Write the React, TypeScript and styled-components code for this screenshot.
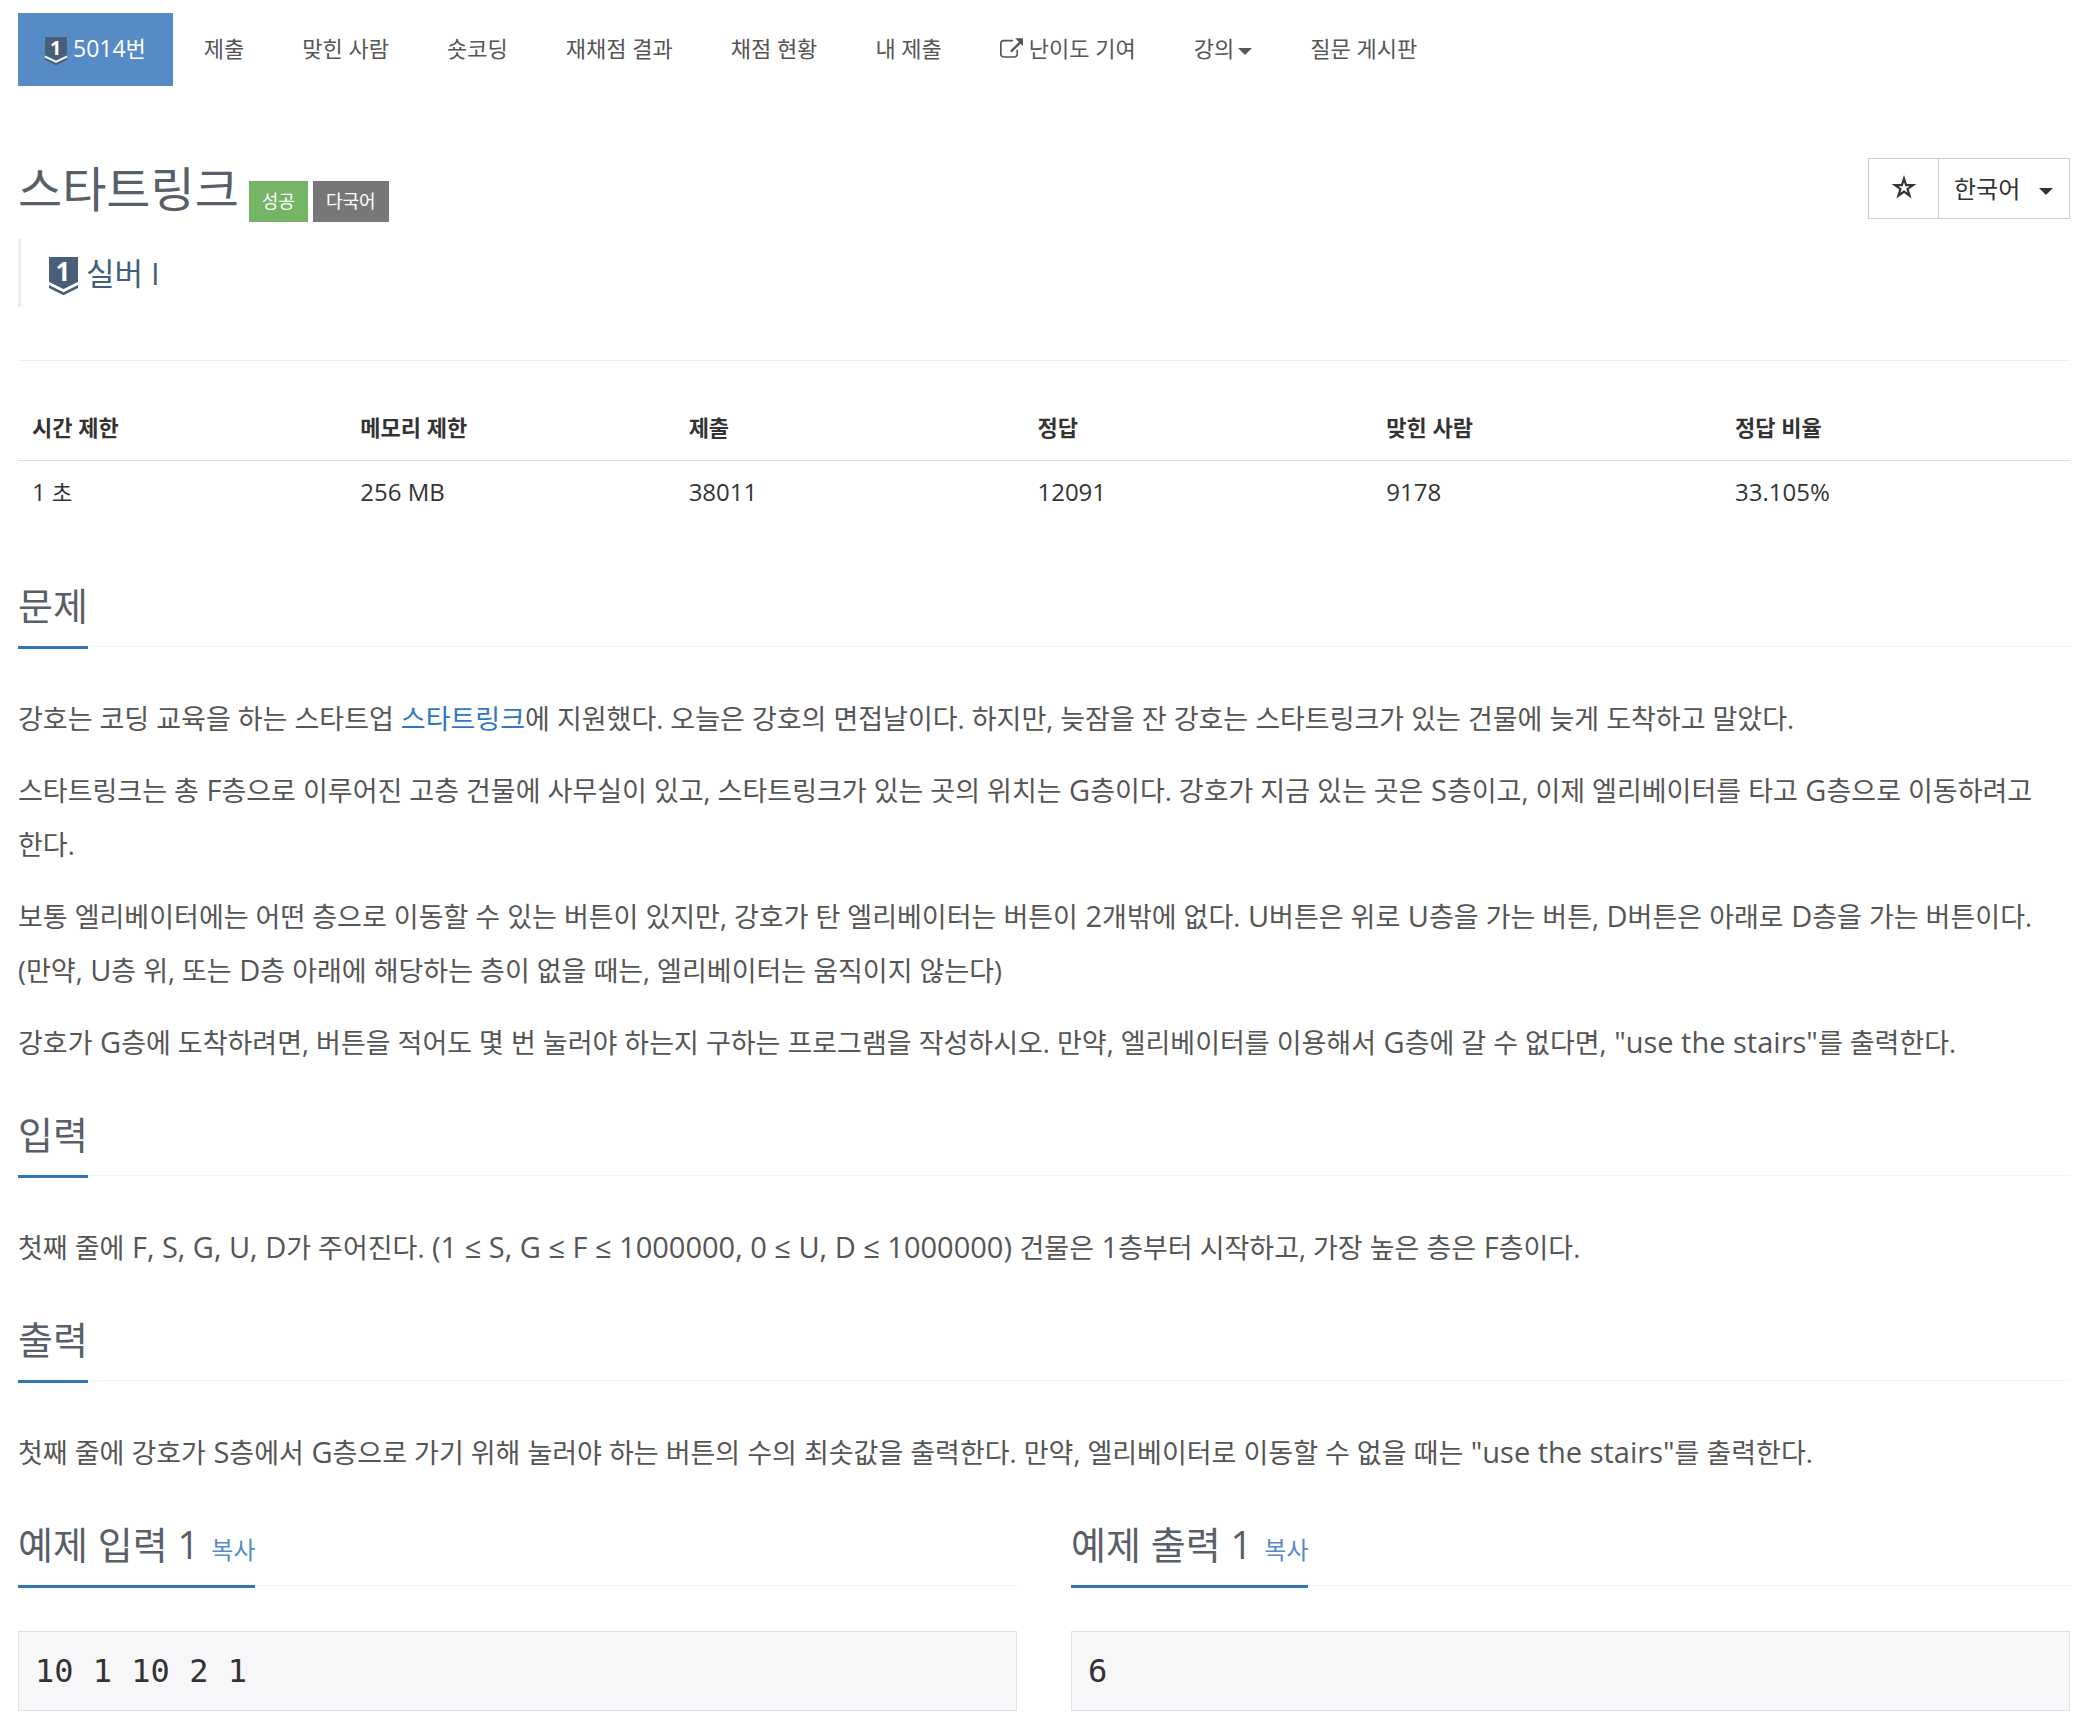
import React from "react";
import styled, { createGlobalStyle } from "styled-components";

const GlobalStyle = createGlobalStyle`
  *, *::before, *::after { box-sizing: border-box; }
  body {
    margin: 0;
    background: #fff;
    color: #333;
    font-family: "Open Sans", "Noto Sans CJK KR", sans-serif;
    font-size: 22px;
    line-height: 36px;
    word-break: keep-all;
  }
  a { text-decoration: none; }
  button, select { font-family: inherit; cursor: pointer; }
`;

const Page = styled.main`
  padding: 13px 28px 24px 18px;
`;

const Tabs = styled.ul`
  display: flex;
  flex-wrap: wrap;
  gap: 4px;
  margin: 0 0 72px;
  padding: 0;
  list-style: none;
`;

const tabBox = `
  display: flex;
  align-items: center;
  height: 73px;
  padding: 0 27px 3px;
  border: 0;
  font-size: 22px;
  line-height: 36px;
`;

const TabLink = styled.a<{ $active?: boolean }>`
  ${tabBox}
  gap: 6px;
  background: ${(p) => (p.$active ? "#568bc6" : "transparent")};
  color: ${(p) => (p.$active ? "#fff" : "#555")};
`;

const TabMenu = styled.button`
  ${tabBox}
  gap: 4px;
  background: transparent;
  color: #555;
`;

/* Latin letters and digits are set a little larger than the Hangul around them. */
const Latin = styled.span<{ $size: number }>`
  font-size: ${(p) => p.$size}px;
  line-height: 1;
`;

const Header = styled.header`
  display: flex;
  justify-content: space-between;
  align-items: flex-start;
`;

const TitleRow = styled.div`
  display: flex;
  align-items: flex-end;
  gap: 5px;
  height: 64px;
`;

const Title = styled.h1`
  margin: 0 5px 0 0;
  color: #585f69;
  font-size: 48px;
  font-weight: 400;
  line-height: 66px;
`;

const Label = styled.span<{ $color: string }>`
  padding: 0 13px;
  background: ${(p) => p.$color};
  color: #fff;
  font-size: 18px;
  line-height: 41px;
`;

const Actions = styled.div`
  display: flex;
  height: 61px;
  border: 1px solid #ccc;
`;

const StarButton = styled.button`
  display: flex;
  align-items: center;
  justify-content: center;
  width: 70px;
  padding: 0 0 4px;
  border: 0;
  border-right: 1px solid #ccc;
  background: #fff;
  color: #333;
`;

const LanguageBox = styled.label`
  display: grid;
  align-items: center;
  > * { grid-area: 1 / 1; }
  > svg { justify-self: end; margin-right: 16px; pointer-events: none; }
`;

const LanguageSelect = styled.select`
  appearance: none;
  width: 130px;
  height: 59px;
  padding: 0 15px;
  border: 0;
  border-radius: 0;
  background: #fff;
  color: #333;
  font-size: 24px;
`;

const Tier = styled.blockquote`
  display: flex;
  align-items: center;
  gap: 8px;
  height: 68px;
  margin: 17px 0 53px;
  padding-left: 28px;
  border-left: 3px solid #eee;
  color: #435f7a;
  font-size: 31px;
`;

const Rule = styled.hr`
  margin: 0 0 42px;
  border: 0;
  border-top: 1px solid #eee;
`;

const InfoTable = styled.table`
  width: 100%;
  margin-bottom: 55px;
  border-collapse: collapse;
  table-layout: fixed;
`;

const HeadCell = styled.th<{ $width: string }>`
  width: ${(p) => p.$width};
  height: 57px;
  padding: 0 14px 8px;
  border-bottom: 1px solid #ddd;
  font-weight: 700;
  text-align: left;
  vertical-align: middle;
  line-height: 32px;
`;

const Cell = styled.td`
  height: 63px;
  padding: 0 14px;
  vertical-align: middle;
  line-height: 32px;
`;

const Headline = styled.div`
  display: flex;
  margin-bottom: 45px;
  border-bottom: 1px dotted #e4e9f0;
`;

const HeadlineText = styled.h2`
  margin: 0 0 -3px;
  padding-bottom: 14px;
  border-bottom: 3px solid #3276b8;
  color: #585f69;
  font-size: 38px;
  font-weight: 400;
  line-height: 54px;
`;

const CopyButton = styled.button`
  padding: 0;
  margin-left: 12px;
  border: 0;
  background: none;
  color: #568bc6;
  font-size: 24px;
`;

const Body = styled.div`
  margin-bottom: 37px;
  color: #555;
  font-size: 27px;
  line-height: 54px;
  p { margin: 0 0 18px; }
`;

const TextLink = styled.a`
  color: #2f78bf;
`;

const Samples = styled.div`
  display: grid;
  grid-template-columns: 1fr 1fr;
  gap: 54px;
`;

const SampleData = styled.pre`
  margin: 0;
  padding: 12px 16px;
  border: 1px solid #e0e0e7;
  background: #f7f7f9;
  color: #333;
  font-family: "DejaVu Sans Mono", monospace;
  font-size: 32px;
  line-height: 54px;
`;

const BadgeSvg = styled.svg`
  flex: none;
  margin-top: 6px;
  overflow: visible;
`;

const CaretSvg = styled.svg`
  flex: none;
  margin-top: 6px;
`;

const SilverBadge = ({ width, height }: { width: number; height: number }) => (
  <BadgeSvg width={width} height={height} viewBox="0 0 29 38" preserveAspectRatio="none" aria-hidden="true">
    <path fill="#485e79" d="M0 0h29v25L14.500 32.300 0 25z" />
    <path fill="#fff" d="M0 25l14.500 7.300L29 25v3l-14.500 7.300L0 28z" />
    <path fill="#485e79" d="M0 28l14.500 7.300L29 28v3l-14.500 7.300L0 31z" />
    <text x="14" y="24" fill="#fff" fontFamily="Open Sans" fontWeight="700" fontSize="26" textAnchor="middle">
      1
    </text>
  </BadgeSvg>
);

const Caret = () => (
  <CaretSvg width="14" height="7" viewBox="0 0 14 7" aria-hidden="true">
    <path fill="currentColor" d="M0 0h14L7 7z" />
  </CaretSvg>
);

const ExternalIcon = () => (
  <svg width="23" height="20" viewBox="0 0 1792 1536" aria-hidden="true">
    <path
      fill="currentColor"
      d="M1408 928v320q0 119-84.500 203.500T1120 1536H288q-119 0-203.500-84.500T0 1248V416q0-119 84.500-203.500T288 128h704q14 0 23 9t9 23v64q0 14-9 23t-23 9H288q-66 0-113 47t-47 113v832q0 66 47 113t113 47h832q66 0 113-47t47-113V928q0-14 9-23t23-9h64q14 0 23 9t9 23zM1792 0v620l-190-190-690 690-130-130 690-690L1180 0z"
    />
  </svg>
);

const starPoints = (radius: number) =>
  Array.from({ length: 10 }, (_, i) => {
    const r = i % 2 ? radius * 0.382 : radius;
    const a = (Math.PI / 5) * i - Math.PI / 2;
    return `${(13 + r * Math.cos(a)).toFixed(2)} ${(13 + r * Math.sin(a)).toFixed(2)}`;
  }).join("L");

const StarIcon = () => (
  <svg width="26" height="24" viewBox="0 0 26 24" aria-hidden="true">
    <path fill="currentColor" fillRule="evenodd" d={`M${starPoints(13)}ZM${starPoints(6)}Z`} />
  </svg>
);

const mixed = (text: string, size: number) =>
  text
    .split(/([ (]*[A-Za-z0-9"≤][A-Za-z0-9"≤ ,.()%]*)/)
    .map((part, i) =>
      i % 2 ? (
        <Latin key={i} $size={size}>
          {part}
        </Latin>
      ) : (
        part
      )
    );

const info = [
  { head: "시간 제한", value: "1 초", width: "16%" },
  { head: "메모리 제한", value: "256 MB", width: "16%" },
  { head: "제출", value: "38011", width: "17%" },
  { head: "정답", value: "12091", width: "17%" },
  { head: "맞힌 사람", value: "9178", width: "17%" },
  { head: "정답 비율", value: "33.105%", width: "17%" },
];

const samples = [
  { title: "예제 입력 1", data: "10 1 10 2 1" },
  { title: "예제 출력 1", data: "6" },
];

const Paragraph = ({ children }: { children: React.ReactNode }) => (
  <p>{React.Children.map(children, (c) => (typeof c === "string" ? mixed(c, 29) : c))}</p>
);

const Section = ({ title, children }: { title: string; children: React.ReactNode }) => (
  <section>
    <Headline>
      <HeadlineText>{title}</HeadlineText>
    </Headline>
    <Body>{children}</Body>
  </section>
);

export default function App() {
  return (
    <>
      <GlobalStyle />
      <Page>
        <nav>
          <Tabs>
            <li>
              <TabLink href="#problem" $active>
                <SilverBadge width={22} height={28} />
                <span>{mixed("5014번", 23)}</span>
              </TabLink>
            </li>
            {["제출", "맞힌 사람", "숏코딩", "재채점 결과", "채점 현황", "내 제출"].map((t) => (
              <li key={t}>
                <TabLink href="#tab">{t}</TabLink>
              </li>
            ))}
            <li>
              <TabLink href="#difficulty">
                <ExternalIcon />
                난이도 기여
              </TabLink>
            </li>
            <li>
              <TabMenu type="button" aria-haspopup="menu">
                강의
                <Caret />
              </TabMenu>
            </li>
            <li>
              <TabLink href="#board">질문 게시판</TabLink>
            </li>
          </Tabs>
        </nav>

        <Header>
          <TitleRow>
            <Title>스타트링크</Title>
            <Label $color="#74b566">성공</Label>
            <Label $color="#777">다국어</Label>
          </TitleRow>
          <Actions>
            <StarButton type="button" aria-label="즐겨찾기">
              <StarIcon />
            </StarButton>
            <LanguageBox>
              <LanguageSelect aria-label="언어">
                <option>한국어</option>
              </LanguageSelect>
              <Caret />
            </LanguageBox>
          </Actions>
        </Header>

        <Tier>
          <SilverBadge width={29} height={38} />
          실버 I
        </Tier>
        <Rule />

        <InfoTable>
          <thead>
            <tr>
              {info.map((c) => (
                <HeadCell key={c.head} $width={c.width}>
                  {c.head}
                </HeadCell>
              ))}
            </tr>
          </thead>
          <tbody>
            <tr>
              {info.map((c) => (
                <Cell key={c.head}>{mixed(c.value, 24)}</Cell>
              ))}
            </tr>
          </tbody>
        </InfoTable>

        <Section title="문제">
          <Paragraph>
            강호는 코딩 교육을 하는 스타트업 <TextLink href="#startlink">스타트링크</TextLink>에 지원했다. 오늘은
            강호의 면접날이다. 하지만, 늦잠을 잔 강호는 스타트링크가 있는 건물에 늦게 도착하고 말았다.
          </Paragraph>
          <Paragraph>
            스타트링크는 총 F층으로 이루어진 고층 건물에 사무실이 있고, 스타트링크가 있는 곳의 위치는 G층이다. 강호가
            지금 있는 곳은 S층이고, 이제 엘리베이터를 타고 G층으로 이동하려고 한다.
          </Paragraph>
          <Paragraph>
            보통 엘리베이터에는 어떤 층으로 이동할 수 있는 버튼이 있지만, 강호가 탄 엘리베이터는 버튼이 2개밖에 없다.
            U버튼은 위로 U층을 가는 버튼, D버튼은 아래로 D층을 가는 버튼이다. (만약, U층 위, 또는 D층 아래에 해당하는
            층이 없을 때는, 엘리베이터는 움직이지 않는다)
          </Paragraph>
          <Paragraph>
            강호가 G층에 도착하려면, 버튼을 적어도 몇 번 눌러야 하는지 구하는 프로그램을 작성하시오. 만약,
            엘리베이터를 이용해서 G층에 갈 수 없다면, "use the stairs"를 출력한다.
          </Paragraph>
        </Section>

        <Section title="입력">
          <Paragraph>
            첫째 줄에 F, S, G, U, D가 주어진다. (1 ≤ S, G ≤ F ≤ 1000000, 0 ≤ U, D ≤ 1000000) 건물은 1층부터 시작하고,
            가장 높은 층은 F층이다.
          </Paragraph>
        </Section>

        <Section title="출력">
          <Paragraph>
            첫째 줄에 강호가 S층에서 G층으로 가기 위해 눌러야 하는 버튼의 수의 최솟값을 출력한다. 만약, 엘리베이터로
            이동할 수 없을 때는 "use the stairs"를 출력한다.
          </Paragraph>
        </Section>

        <Samples>
          {samples.map((s) => (
            <section key={s.title}>
              <Headline>
                <HeadlineText>
                  {s.title}
                  <CopyButton type="button">복사</CopyButton>
                </HeadlineText>
              </Headline>
              <SampleData>{s.data}</SampleData>
            </section>
          ))}
        </Samples>
      </Page>
    </>
  );
}
